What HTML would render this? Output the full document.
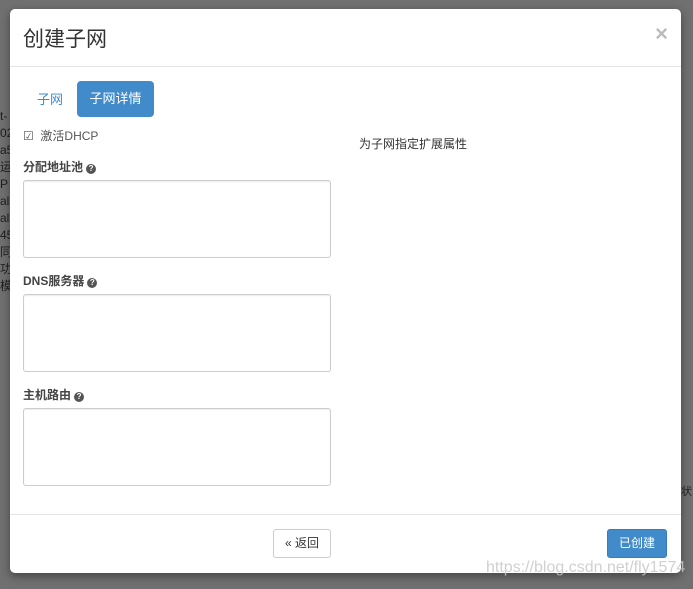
<!DOCTYPE html>
<html><head><meta charset="utf-8"><style>
*{box-sizing:border-box;margin:0;padding:0}
body{width:693px;height:589px;overflow:hidden;background:#707070;font-family:"Liberation Sans","Noto Sans CJK SC",sans-serif;position:relative;color:#333}
.bgtxt{position:absolute;left:0;font-size:12px;color:#1e1e1e;line-height:17px;top:108px}
.modal{position:absolute;left:10px;top:9px;width:671px;height:564px;background:#fff;border-radius:5px;box-shadow:0 3px 9px rgba(0,0,0,.4)}
.title{position:absolute;left:13px;top:14px;font-size:21px;color:#333}
.close{position:absolute;right:13px;top:12px;font-size:22px;font-weight:bold;color:#bbb}
.hr{position:absolute;left:0;right:0;height:1px;background:#e5e5e5}
.tab1{position:absolute;left:27px;top:80px;font-size:13px;color:#428bca}
.tab2{position:absolute;left:67px;top:72px;width:77px;height:36px;background:#428bca;border-radius:4px;color:#fff;font-size:13px;line-height:36px;text-align:center}
.lbl{position:absolute;left:13px;font-size:12px;font-weight:bold;color:#444}
.q{display:inline-block;width:10px;height:10px;border-radius:50%;background:#555;color:#fff;font-size:8px;line-height:10px;text-align:center;vertical-align:0;margin-left:3px}
.ta{position:absolute;left:13px;width:308px;height:78px;border:1px solid #ccc;border-radius:3px;box-shadow:inset 0 1px 1px rgba(0,0,0,.075)}
.btn{position:absolute;top:520px;height:29px;border-radius:3px;font-size:12px;line-height:27px;text-align:center}
</style></head><body>
<div class="bgtxt">t-<br>02<br>a5<br>运行<br>P<br>als<br>als<br>45<br>同步<br>功理<br>模拟</div>
<div style="position:absolute;left:681px;top:483px;font-size:11px;color:#222">状</div>
<div class="modal">
<div class="title">创建子网</div>
<div class="close">×</div>
<div class="hr" style="top:57px"></div>
<div class="tab1">子网</div>
<div class="tab2">子网详情</div>
<div style="position:absolute;left:13px;top:118px;font-size:12px;color:#555">☑ &nbsp;激活DHCP</div>
<div style="position:absolute;left:349px;top:126px;font-size:12px;color:#333">为子网指定扩展属性</div>
<div class="lbl" style="top:149px">分配地址池<span class="q">?</span></div>
<div class="ta" style="top:171px"></div>
<div class="lbl" style="top:263px">DNS服务器<span class="q">?</span></div>
<div class="ta" style="top:285px"></div>
<div class="lbl" style="top:377px">主机路由<span class="q">?</span></div>
<div class="ta" style="top:399px"></div>
<div class="hr" style="top:505px"></div>
<div class="btn" style="left:263px;width:58px;border:1px solid #ccc;color:#333">« 返回</div>
<div class="btn" style="left:597px;width:60px;background:#428bca;color:#fff;border:1px solid #357ebd">已创建</div>
</div>
<div style="position:absolute;left:486px;top:559px;font-size:16px;color:rgba(200,200,200,.85)">https://blog.csdn.net/fly1574</div>
</body></html>
